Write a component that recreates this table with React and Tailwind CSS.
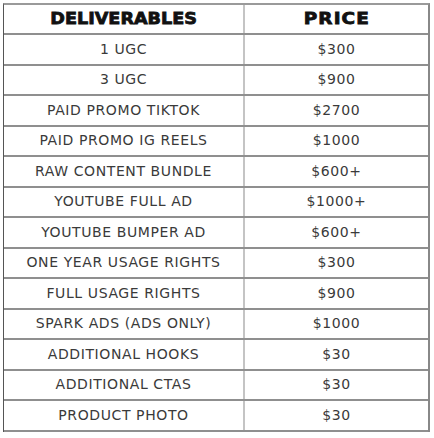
const rows = [
  ["1 UGC", "$300"],
  ["3 UGC", "$900"],
  ["PAID PROMO TIKTOK", "$2700"],
  ["PAID PROMO IG REELS", "$1000"],
  ["RAW CONTENT BUNDLE", "$600+"],
  ["YOUTUBE FULL AD", "$1000+"],
  ["YOUTUBE BUMPER AD", "$600+"],
  ["ONE YEAR USAGE RIGHTS", "$300"],
  ["FULL USAGE RIGHTS", "$900"],
  ["SPARK ADS (ADS ONLY)", "$1000"],
  ["ADDITIONAL HOOKS", "$30"],
  ["ADDITIONAL CTAS", "$30"],
  ["PRODUCT PHOTO", "$30"],
];

export default function App() {
  return (
    <div className="w-[434px] h-[438px] bg-white pl-[3px] pt-[3px]">
      <div className="w-[427px] border-t-2 border-t-[#9a9a9a] border-l border-l-[#555] border-r-2 border-r-[#888] font-['DejaVu_Sans',sans-serif]">
        {/* header */}
        <div className="flex h-[30px] border-b-2 border-b-[#8f8f8f] text-[#111] font-bold text-[16px] [-webkit-text-stroke:0.8px_#111]">
          <div className="w-[241px] flex items-center justify-center border-r-2 border-r-[#c4c4c4]">
            <span className="inline-block scale-x-[1.1]">DELIVERABLES</span>
          </div>
          <div className="flex-1 flex items-center justify-center">
            <span className="inline-block tracking-[1px] scale-x-[1.15]">PRICE</span>
          </div>
        </div>
        {rows.map(([name, price]) => (
          <div key={name} className="flex h-[30.5px] border-b-2 border-b-[#8f8f8f] text-[#3a3a3a] text-[14px] tracking-[0.6px]">
            <div className="w-[241px] flex items-center justify-center border-r-2 border-r-[#c4c4c4]">{name}</div>
            <div className="flex-1 flex items-center justify-center">{price}</div>
          </div>
        ))}
      </div>
    </div>
  );
}
